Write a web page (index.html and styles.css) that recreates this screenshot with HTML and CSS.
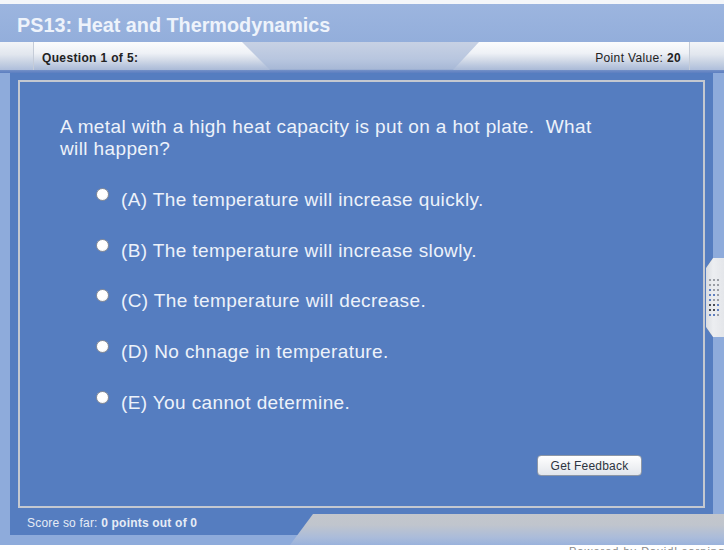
FILE: index.html
```html
<!DOCTYPE html>
<html>
<head>
<meta charset="utf-8">
<link rel="stylesheet" href="styles.css">
</head>
<body>
<div class="app">
  <div class="topgap"></div>
  <header class="header">PS13: Heat and Thermodynamics</header>
  <div class="tabbar">
    <div class="cap cap-left"></div>
    <div class="tab tab-left"><span>Question 1 of 5:</span></div>
    <div class="recess"></div>
    <div class="tab tab-right"><span>Point Value: <b>20</b></span></div>
    <div class="cap cap-right"></div>
  </div>
  <div class="body">
    <div class="strip strip-left"></div>
    <main class="main">
      <section class="panel">
        <p class="question">A metal with a high heat capacity is put on a hot plate.&nbsp; What will happen?</p>
        <ul class="options">
          <li class="option"><span class="radio"></span><span>(A) The temperature will increase quickly.</span></li>
          <li class="option"><span class="radio"></span><span>(B) The temperature will increase slowly.</span></li>
          <li class="option"><span class="radio"></span><span>(C) The temperature will decrease.</span></li>
          <li class="option"><span class="radio"></span><span>(D) No chnage in temperature.</span></li>
          <li class="option"><span class="radio"></span><span>(E) You cannot determine.</span></li>
        </ul>
        <div class="actions"><button class="btn">Get Feedback</button></div>
      </section>
      <div class="score">Score so far: <b>0 points out of 0</b></div>
    </main>
    <div class="strip strip-right"></div>
    <div class="handle-wrap">
      <div class="handle">
        <div class="dots">
          <i></i><i></i><i></i>
          <i></i><i></i><i></i>
          <i class="b"></i><i></i><i></i>
          <i class="b"></i><i class="b"></i><i></i>
          <i class="b"></i><i></i><i></i>
          <i class="k"></i><i class="k"></i><i class="b"></i>
          <i class="k"></i><i class="k"></i><i class="b"></i>
          <i class="b"></i><i class="b"></i><i></i>
        </div>
      </div>
    </div>
    <div class="bottomtab"></div>
  </div>
  <div class="footer">Powered by DavidLearning Center</div>
</div>
</body>
</html>
```

FILE: styles.css
```css
html, body {
  margin: 0;
  padding: 0;
  background: #ffffff;
  overflow: hidden;
}

.app {
  width: 724px;
  height: 550px;
  font-family: "Liberation Sans", Arial, sans-serif;
  display: flex;
  flex-direction: column;
  overflow: hidden;
}

.topgap {
  height: 4px;
  background: #f4f6f9;
}

.header {
  height: 38px;
  box-sizing: border-box;
  padding: 10px 0 0 17px;
  background: linear-gradient(#9cb5df, #93aedb);
  color: #eef3fb;
  font-size: 19.8px;
  font-weight: bold;
  line-height: 22px;
}

.tabbar {
  height: 31px;
  display: flex;
  background: linear-gradient(#c7d1e4 0%, #b8c6df 55%, #a7b8d6 88%, #6f8dc6 92%, #5c7ec0 100%);
}

.cap {
  height: 28px;
  background: linear-gradient(#f3f5f8 0%, #e1e6ee 45%, #c5d0e2 75%, #aebedb 100%);
}
.cap-left { width: 33px; }
.cap-right { width: 34px; border-left: 1px solid #c5ccd8; }

.tab {
  height: 28px;
  box-sizing: border-box;
  padding-top: 5px;
  line-height: 23px;
  font-size: 12px;
  color: #222;
  background: linear-gradient(#fbfcfd 0%, #eef1f6 40%, #d6dde9 62%, #bac7de 85%, #aabad7 100%);
  border-left: 1px solid #c5ccd8;
  letter-spacing: 0.35px;
}

.tab-left {
  width: 237px;
  padding-left: 8px;
  font-weight: bold;
  clip-path: polygon(0 0, 209px 0, 100% 100%, 0 100%);
}

.recess { flex: 1; }

.tab-right {
  width: 236px;
  text-align: right;
  padding-right: 8px;
  border-left: none;
  clip-path: polygon(26px 0, 100% 0, 100% 100%, 0 100%);
}

.body {
  position: relative;
  height: 472px;
  display: flex;
  background: #8eabdb;
}

.strip {
  background: #8eabdb;
}
.strip-left { width: 10px; }
.strip-right { width: 11px; }

.main {
  flex: 1;
  background: #557dc0;
  padding: 7px 8px 0 8px;
  display: flex;
  flex-direction: column;
  align-self: flex-start;
  height: 462px;
  box-sizing: border-box;
}

.panel {
  height: 428px;
  box-sizing: border-box;
  border: 2px solid #c4c8d0;
  display: flex;
  flex-direction: column;
  color: #edf2fa;
}

.question {
  margin: 0;
  padding: 34px 0 0 40px;
  width: 545px;
  font-size: 19px;
  line-height: 22px;
  letter-spacing: 0.38px;
}

.options {
  list-style: none;
  margin: 29px 0 0 0;
  padding: 0 0 0 76px;
  display: flex;
  flex-direction: column;
  gap: 28.7px;
}

.option {
  display: flex;
  align-items: flex-start;
  gap: 12px;
  font-size: 19px;
  line-height: 22px;
  letter-spacing: 0.38px;
}

.radio {
  width: 13px;
  height: 13px;
  margin-top: -1px;
  box-sizing: border-box;
  border-radius: 50%;
  border: 1px solid #8c8f96;
  background: radial-gradient(circle at 45% 40%, #ffffff 55%, #dcdfe4 100%);
  flex: none;
}

.actions {
  margin-top: auto;
  display: flex;
  justify-content: flex-end;
  padding: 0 61px 30px 0;
}

.btn {
  width: 105px;
  height: 21px;
  padding: 0;
  border: 1px solid #8d97a6;
  border-radius: 4px;
  background: linear-gradient(#ffffff, #eef0f3 60%, #e2e6ec);
  font-family: "Liberation Sans", Arial, sans-serif;
  font-size: 12px;
  letter-spacing: 0.2px;
  color: #2c3440;
}

.score {
  height: 27px;
  box-sizing: border-box;
  padding: 2px 0 0 9px;
  line-height: 26px;
  font-size: 12px;
  color: #e6ecf6;
  letter-spacing: 0.2px;
}

.handle-wrap {
  position: absolute;
  right: 0;
  top: 185px;
  width: 18px;
  height: 79px;
  filter: drop-shadow(0 0 0.6px #6b7280);
}

.handle {
  width: 100%;
  height: 100%;
  background: linear-gradient(90deg, #d9dce1, #eceef1 40%, #e4e6ea);
  clip-path: polygon(0 10px, 7px 0, 100% 0, 100% 100%, 7px 100%, 0 calc(100% - 10px));
}

.dots {
  display: grid;
  grid-template-columns: repeat(3, 2px);
  column-gap: 2px;
  row-gap: 3px;
  padding: 21px 0 0 3px;
}
.dots i {
  width: 2px;
  height: 2px;
  background: #9a9ea5;
}
.dots i.b { background: #5f7fc0; }
.dots i.k { background: #4a4e56; }

.bottomtab {
  position: absolute;
  left: 290px;
  right: 0;
  top: 441px;
  height: 31px;
  background: linear-gradient(#c3c6cc 0%, #c0c5cd 35%, #abbcda 75%, #9ab2dc 100%);
  clip-path: polygon(23px 0, 100% 0, 100% 100%, 0 100%);
}

.footer {
  height: 5px;
  padding-left: 569px;
  font-size: 11px;
  line-height: 12px;
  color: #8a8a8a;
  white-space: nowrap;
  overflow: hidden;
  letter-spacing: 1px;
}
```
